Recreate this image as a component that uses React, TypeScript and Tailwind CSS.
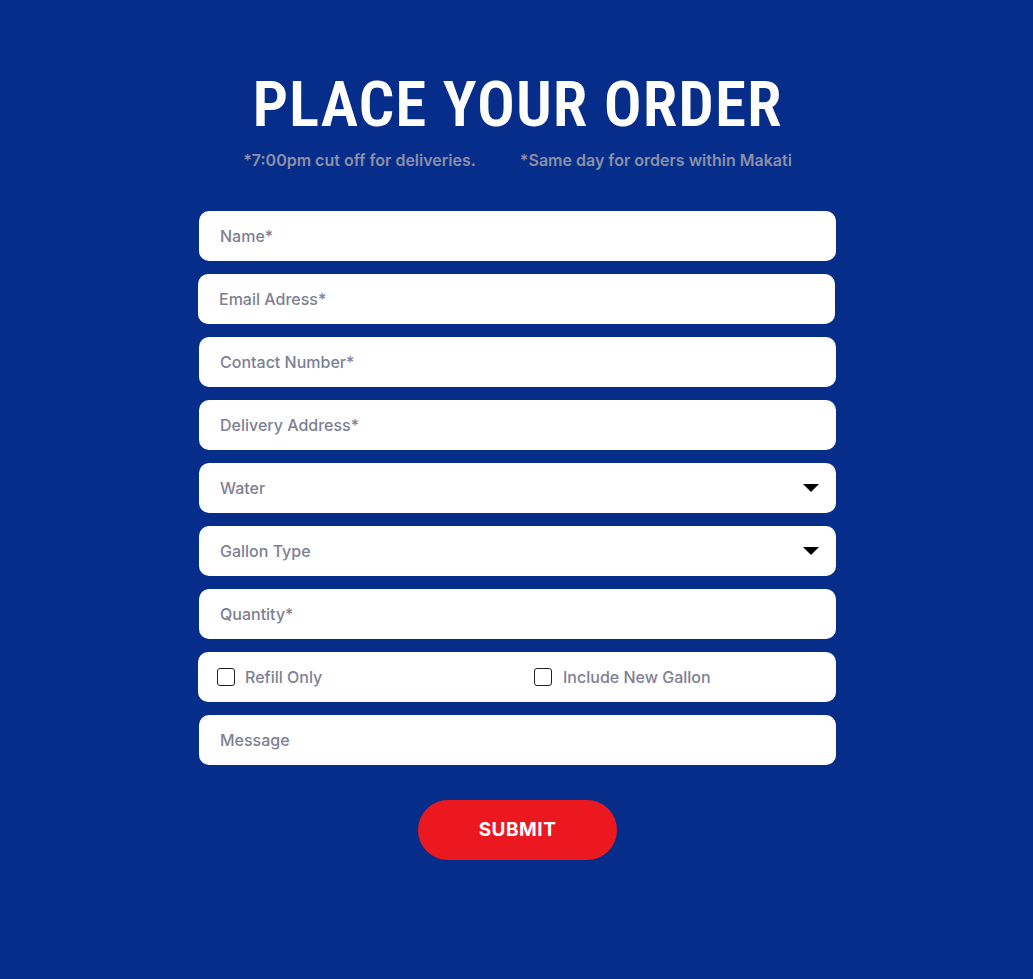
import { useState } from "react";

const fieldClass =
  "w-full h-[50px] rounded-[10px] bg-white px-[21px] text-[16px] font-medium text-[#7d7f94] outline-none placeholder:text-[#7d7f94]";

const Caret = () => (
  <svg width="16" height="8" viewBox="0 0 16 8" className="absolute right-[17px] top-[21px]">
    <path d="M0 0 L16 0 L8 8 Z" fill="#000" />
  </svg>
);

const App = () => {
  const [refill, setRefill] = useState(false);
  const [newGallon, setNewGallon] = useState(false);

  return (
    <div
      className="min-h-[979px] w-full bg-[#062d89] pt-[73px] pl-[2px]"
      style={{ fontFamily: 'Inter, "Liberation Sans", Arial, sans-serif' }}
    >
      <h1
        className="text-center text-[63px] leading-[64px] font-semibold text-white tracking-[1px]"
        style={{ fontFamily: '"Roboto Condensed", "Liberation Sans Narrow", Roboto, sans-serif' }}
      >
        PLACE YOUR ORDER
      </h1>
      <div className="mt-[11px] flex justify-center gap-[44px] text-[16px] font-semibold text-[#8c90a8]">
        <span>*7:00pm cut off for deliveries.</span>
        <span>*Same day for orders within Makati</span>
      </div>

      <form className="mx-auto mt-[39px] flex w-[637px] flex-col gap-[13px]">
        <input className={fieldClass} placeholder="Name*" />
        <input className={`${fieldClass} -ml-px`} placeholder="Email Adress*" />
        <input className={fieldClass} placeholder="Contact Number*" />
        <input className={fieldClass} placeholder="Delivery Address*" />
        <div className="relative">
          <div className={`${fieldClass} flex items-center`}>Water</div>
          <Caret />
        </div>
        <div className="relative">
          <div className={`${fieldClass} flex items-center`}>Gallon Type</div>
          <Caret />
        </div>
        <input className={fieldClass} placeholder="Quantity*" />
        <div className="-ml-px flex h-[50px] items-center rounded-[10px] bg-white pl-[19px] text-[16px] font-medium text-[#7d7f94]">
          <label className="flex w-[317px] items-center gap-[10px]">
            <span
              onClick={() => setRefill(!refill)}
              className="h-[18px] w-[18px] rounded-[3px] border-[1.5px] border-[#222]"
            />
            Refill Only
          </label>
          <label className="flex items-center gap-[11px]">
            <span
              onClick={() => setNewGallon(!newGallon)}
              className="h-[18px] w-[18px] rounded-[3px] border-[1.5px] border-[#222]"
            />
            Include New Gallon
          </label>
        </div>
        <input className={fieldClass} placeholder="Message" />

        <div className="mt-[22px] flex justify-center">
          <button
            type="button"
            className="h-[60px] w-[199px] rounded-full bg-[#ec1820] text-[19px] font-bold tracking-[0.5px] text-white"
          >
            SUBMIT
          </button>
        </div>
      </form>
    </div>
  );
};

export default App;
